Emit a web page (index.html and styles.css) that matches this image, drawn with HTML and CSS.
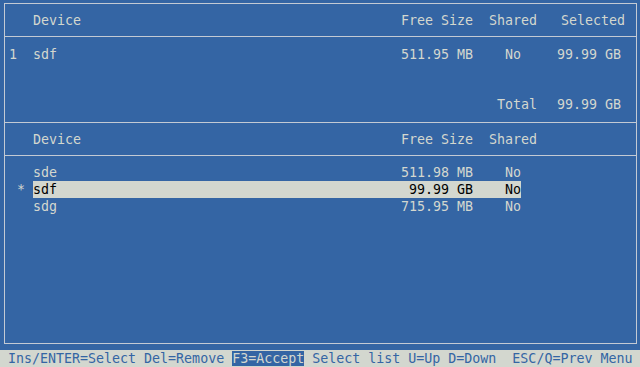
FILE: index.html
```
<!DOCTYPE html>
<html lang="en">
<head>
<meta charset="UTF-8">
<title>Partition disks</title>
<link rel="stylesheet" href="styles.css">
</head>
<body>
  <div class="frame">
    <div class="head">
      <div class="cols">
        <span class="mark"></span><span class="dev">Device</span><span class="free">Free Size</span><span class="shared">Shared</span><span class="selected">Selected</span>
      </div>
    </div>

    <!-- disks already picked -->
    <div class="chosen">
      <div class="cols">
        <span class="mark">1</span><span class="dev">sdf</span><span class="free">511.95 MB</span><span class="shared">No</span><span class="selected">99.99 GB</span>
      </div>
      <div class="cols total">
        <span class="mark"></span><span class="dev"></span><span class="free"></span><span class="shared">Total</span><span class="selected">99.99 GB</span>
      </div>
    </div>

    <div class="head">
      <div class="cols">
        <span class="mark"></span><span class="dev">Device</span><span class="free">Free Size</span><span class="shared">Shared</span>
      </div>
    </div>

    <!-- disks to pick from -->
    <div class="avail">
      <div class="cols">
        <span class="mark"></span><span class="dev">sde</span><span class="free">511.98 MB</span><span class="shared">No</span>
      </div>
      <div class="cols sel">
        <span class="mark"> *</span><span class="dev">sdf</span><span class="free">99.99 GB</span><span class="shared">No</span>
      </div>
      <div class="cols">
        <span class="mark"></span><span class="dev">sdg</span><span class="free">715.95 MB</span><span class="shared">No</span>
      </div>
    </div>
  </div>

  <div class="status"><span>Ins/ENTER=Select Del=Remove </span><span class="key">F3=Accept</span><span> Select list U=Up D=Down  ESC/Q=Prev Menu</span></div>
</body>
</html>
```

FILE: styles.css
```
*{
    margin: 0;
    padding: 0;
    box-sizing: border-box;
}
html, body{
    height: 100%;
}
body{
    display: flex;
    flex-direction: column;
    background-color: #3465a4;
    color: #d3d7cf;
    font-family: "DejaVu Sans Mono", "Liberation Mono", monospace;
    font-size: 13.3px;
    line-height: 17px;
    overflow: hidden;
}

.frame{
    flex: 1;
    display: flex;
    flex-direction: column;
    margin: 3px 3px 6px 4px;
    border: 1px solid #c3cad4;
}

/* column grid shared by every row */
.cols{
    display: grid;
    grid-template-columns: 24px 368px 72px 64px 88px;
    padding-left: 4px;
    white-space: pre;
}
.free{
    text-align: right;
}
.selected{
    text-align: right;
}

.head{
    height: 33px;
    display: flex;
    flex-direction: column;
    justify-content: center;
    border-bottom: 1px solid #c3cad4;
}
.head .shared{
    padding-left: 16px;
}

.chosen{
    height: 86px;
    padding-top: 9px;
    border-bottom: 1px solid #c3cad4;
}
.chosen .shared{
    padding-left: 16px;
    text-align: center;
}
.chosen .selected{
    padding-right: 4px;
}
.chosen .total{
    margin-top: 33px;
}
.chosen .total .shared{
    padding-left: 0;
    text-align: right;
}

.avail{
    flex: 1;
    padding-top: 8px;
}
.avail .cols{
    grid-template-columns: 24px 368px 72px auto;
    justify-content: start;
}
.avail .shared{
    padding-left: 32px;
}
.avail .sel span:not(.mark){
    background-color: #d3d7cf;
    color: #000000;
}

.status{
    height: 17px;
    padding-left: 8px;
    background-color: #d3d7cf;
    color: #3465a4;
    white-space: pre;
}
.status .key{
    background-color: #3465a4;
    color: #d3d7cf;
}
```
